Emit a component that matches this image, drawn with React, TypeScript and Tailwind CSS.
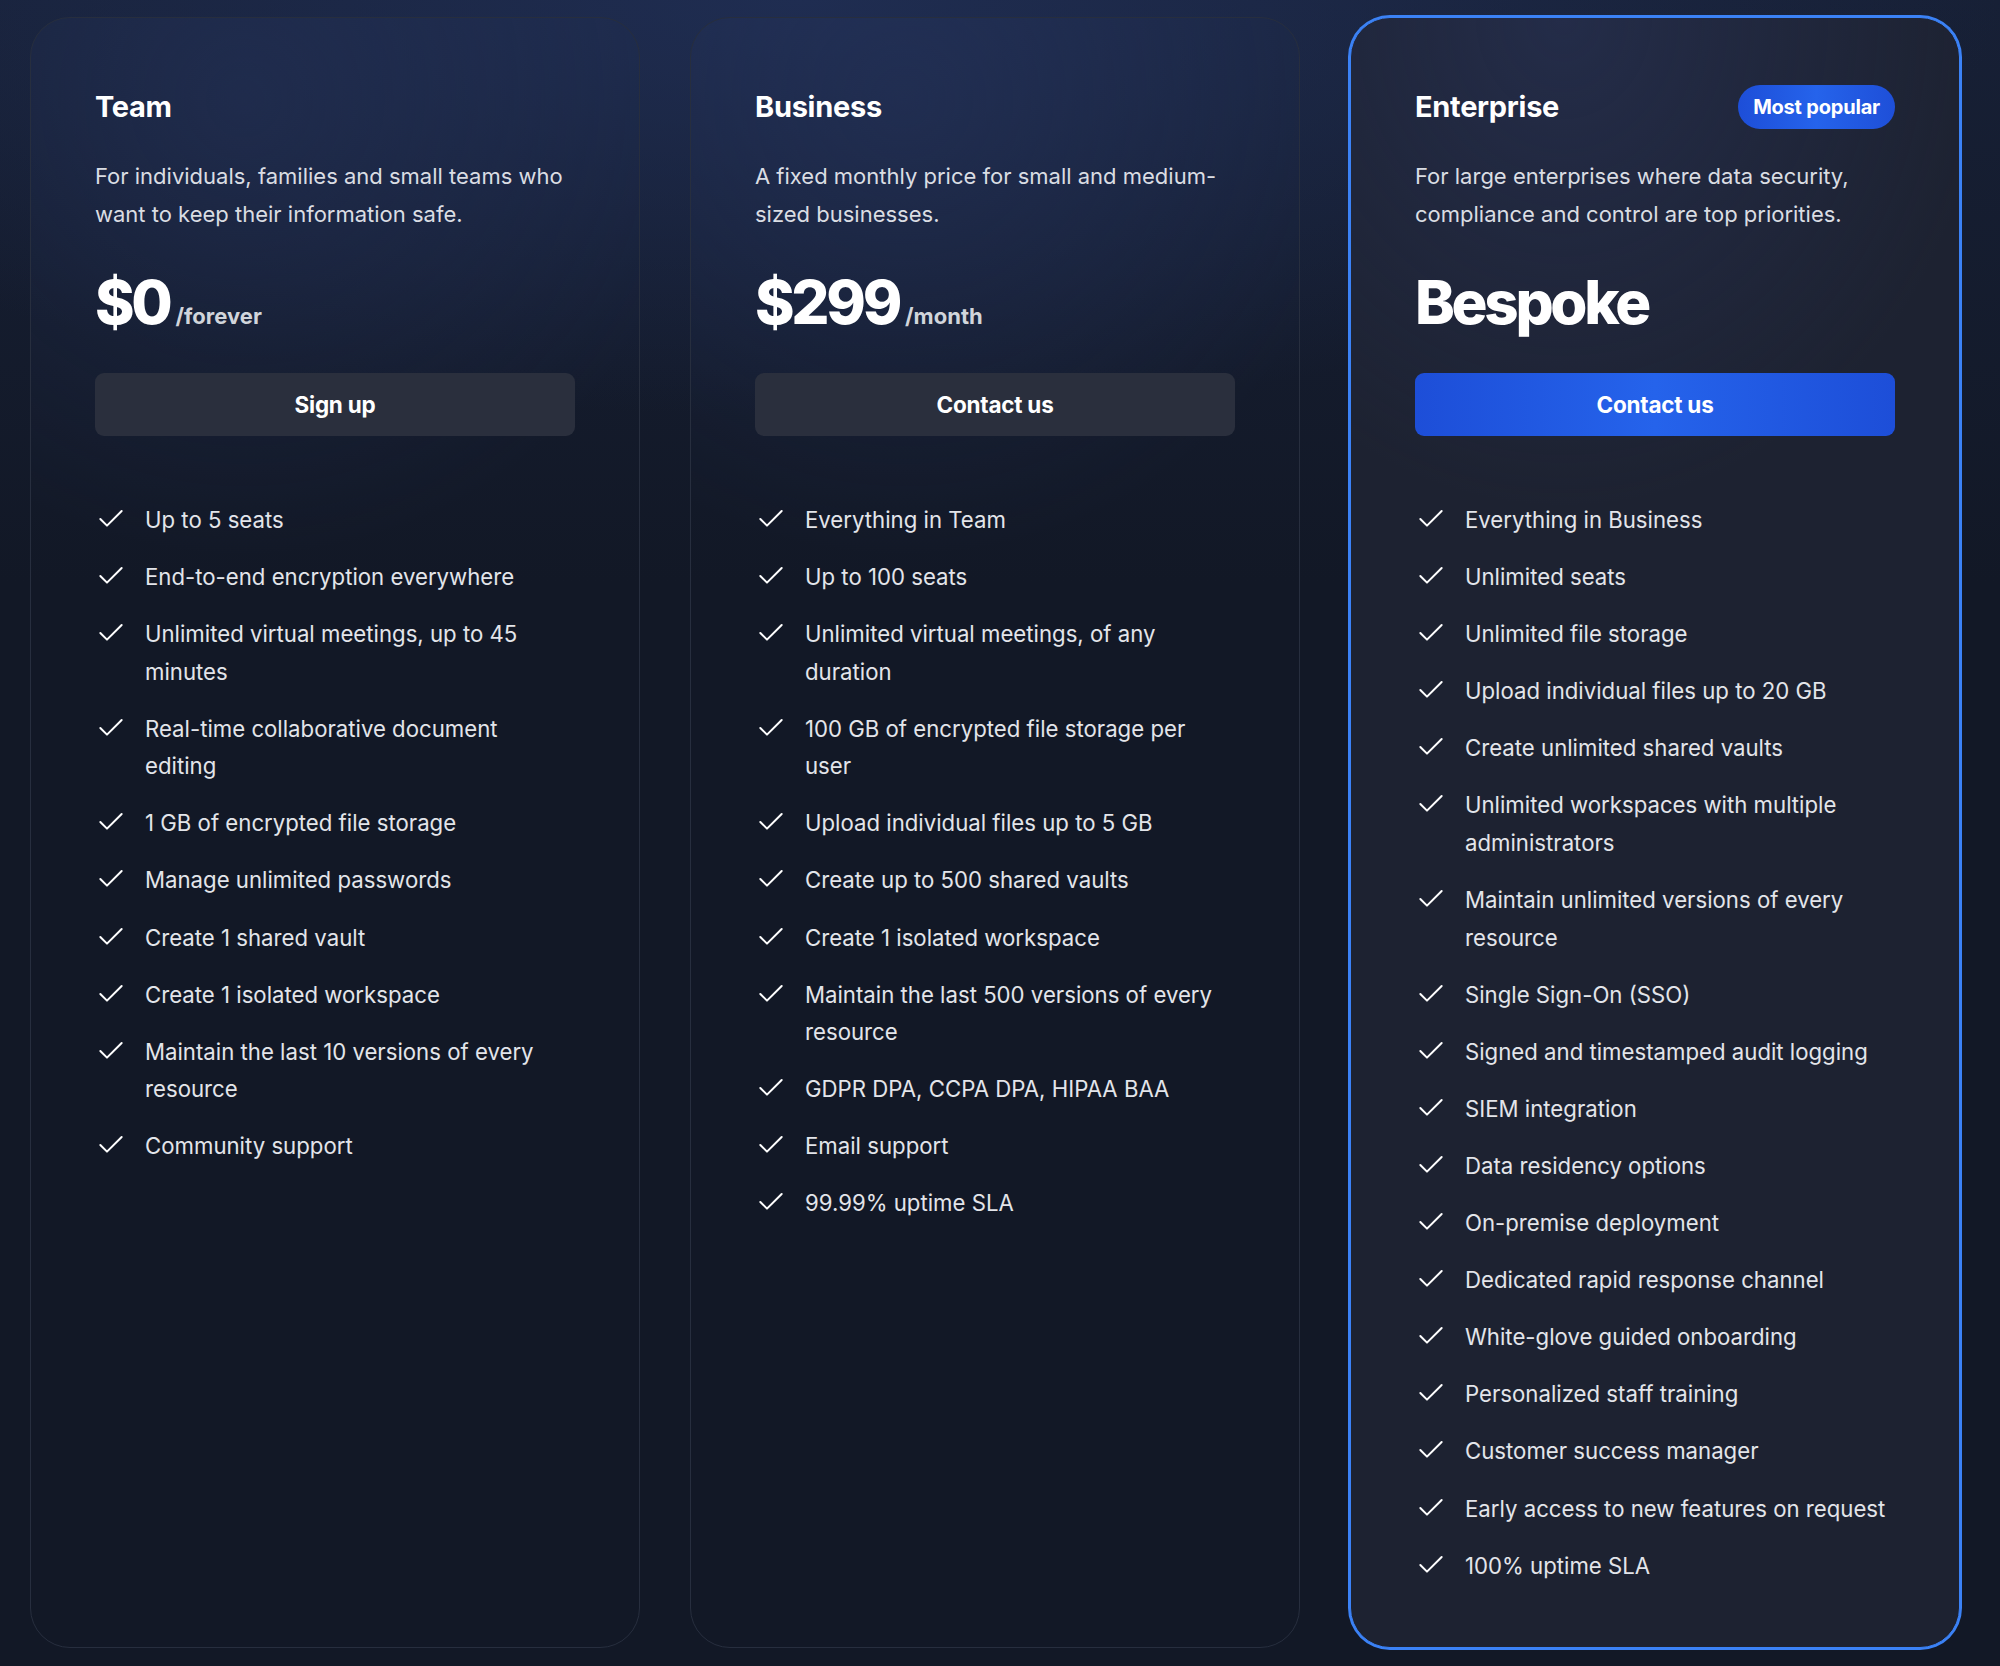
import { Check } from "lucide-react";

type Plan = {
  name: string;
  blurb: string;
  price: string;
  per?: string;
  cta: string;
  featured?: boolean;
  features: string[];
};

const plans: Plan[] = [
  {
    name: "Team",
    blurb: "For individuals, families and small teams who want to keep their information safe.",
    price: "$0",
    per: "/forever",
    cta: "Sign up",
    features: [
      "Up to 5 seats",
      "End-to-end encryption everywhere",
      "Unlimited virtual meetings, up to 45 minutes",
      "Real-time collaborative document editing",
      "1 GB of encrypted file storage",
      "Manage unlimited passwords",
      "Create 1 shared vault",
      "Create 1 isolated workspace",
      "Maintain the last 10 versions of every resource",
      "Community support",
    ],
  },
  {
    name: "Business",
    blurb: "A fixed monthly price for small and medium-sized businesses.",
    price: "$299",
    per: "/month",
    cta: "Contact us",
    features: [
      "Everything in Team",
      "Up to 100 seats",
      "Unlimited virtual meetings, of any duration",
      "100 GB of encrypted file storage per user",
      "Upload individual files up to 5 GB",
      "Create up to 500 shared vaults",
      "Create 1 isolated workspace",
      "Maintain the last 500 versions of every resource",
      "GDPR DPA, CCPA DPA, HIPAA BAA",
      "Email support",
      "99.99% uptime SLA",
    ],
  },
  {
    name: "Enterprise",
    blurb: "For large enterprises where data security, compliance and control are top priorities.",
    price: "Bespoke",
    cta: "Contact us",
    featured: true,
    features: [
      "Everything in Business",
      "Unlimited seats",
      "Unlimited file storage",
      "Upload individual files up to 20 GB",
      "Create unlimited shared vaults",
      "Unlimited workspaces with multiple administrators",
      "Maintain unlimited versions of every resource",
      "Single Sign-On (SSO)",
      "Signed and timestamped audit logging",
      "SIEM integration",
      "Data residency options",
      "On-premise deployment",
      "Dedicated rapid response channel",
      "White-glove guided onboarding",
      "Personalized staff training",
      "Customer success manager",
      "Early access to new features on request",
      "100% uptime SLA",
    ],
  },
];

function PlanCard({ plan }: { plan: Plan }) {
  return (
    <div
      className={
        plan.featured
          ? "rounded-[40px] border border-[#3b82f6] ring-2 ring-[#3b82f6] bg-[#1d2231] bg-[radial-gradient(ellipse_70%_30%_at_35%_0%,rgba(42,54,96,0.5),transparent_100%)] px-[64px] pt-[67px] pb-[63px]"
          : "rounded-[40px] border border-[#272e3e] bg-[radial-gradient(ellipse_75%_28%_at_35%_5%,rgba(38,52,92,0.4),transparent_100%)] px-[64px] pt-[67px] pb-[63px]"
      }
    >
      {/* header */}
      <div className="flex h-[44px] items-center justify-between">
        <h2 className="text-[29px] font-bold leading-[36px] tracking-[-0.01em] text-white">{plan.name}</h2>
        {plan.featured && (
          <span className="flex h-[44px] items-center rounded-full bg-[linear-gradient(90deg,#1d4ed8,#2563eb_50%,#1e4fd8)] px-[15px] text-[20px] font-bold tracking-[-0.01em] text-white">
            Most popular
          </span>
        )}
      </div>

      <p className="mt-[29px] text-[22px] leading-[37.5px] text-[#dadde3]">{plan.blurb}</p>

      <div className="mt-[39px] flex items-baseline leading-none">
        <span className="text-[60px] font-extrabold leading-[60px] tracking-[-0.055em] text-white">{plan.price}</span>
        {plan.per && <span className="ml-[6px] text-[22px] font-bold text-[#d1d5db]">{plan.per}</span>}
      </div>

      <button
        className={
          plan.featured
            ? "mt-[41px] flex h-[63px] w-full items-center justify-center rounded-[9px] bg-[linear-gradient(90deg,#1d4ed8,#2563eb_50%,#1d4ed8)] text-[22.5px] font-bold tracking-[-0.01em] text-white"
            : "mt-[41px] flex h-[63px] w-full items-center justify-center rounded-[9px] bg-[#2a2f3d] text-[22.5px] font-bold tracking-[-0.01em] text-white"
        }
      >
        {plan.cta}
      </button>

      <ul className="mt-[65px] flex flex-col gap-[19.6px]">
        {plan.features.map((f) => (
          <li key={f} className="flex items-start gap-[18px] pr-[7px] text-[22.2px] leading-[37.5px] text-[#e3e5ea]">
            <Check size={32} strokeWidth={1.5} className="mt-[2px] shrink-0 text-white" />
            <span>{f}</span>
          </li>
        ))}
      </ul>
    </div>
  );
}

export default function App() {
  return (
    <div
      className="min-h-[1666px] w-full bg-[#121826] bg-[radial-gradient(ellipse_60%_25%_at_40%_0%,rgba(33,48,88,0.8),transparent_100%),linear-gradient(180deg,#172036_0%,#121826_35%)] py-[17px] pl-[30px] pr-[40px]"
      style={{ fontFamily: "Inter, 'Noto Sans', sans-serif" }}
    >
      <div className="grid grid-cols-[610px_610px_610px] gap-x-[50px]">
        {plans.map((p) => (
          <PlanCard key={p.name} plan={p} />
        ))}
      </div>
    </div>
  );
}
